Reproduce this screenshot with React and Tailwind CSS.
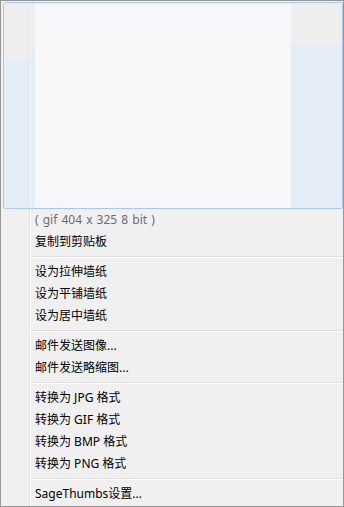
const items = [
  { type: 'item', label: '复制到剪贴板' },
  { type: 'sep' },
  { type: 'item', label: '设为拉伸墙纸' },
  { type: 'item', label: '设为平铺墙纸' },
  { type: 'item', label: '设为居中墙纸' },
  { type: 'sep' },
  { type: 'item', label: '邮件发送图像...' },
  { type: 'item', label: '邮件发送略缩图...' },
  { type: 'sep' },
  { type: 'item', label: '转换为 JPG 格式' },
  { type: 'item', label: '转换为 GIF 格式' },
  { type: 'item', label: '转换为 BMP 格式' },
  { type: 'item', label: '转换为 PNG 格式' },
  { type: 'sep' },
  { type: 'item', label: 'SageThumbs设置...' },
];

function Gutter() {
  return (
    <>
      <div className="w-[28px] shrink-0" />
      <div className="w-px shrink-0 bg-[#e2e3e3]" />
      <div className="w-px shrink-0 bg-white" />
    </>
  );
}

function MenuRow({ children, muted = false }) {
  return (
    <div className="flex h-[22px]">
      <Gutter />
      <div
        className={
          'flex items-center pl-[4px] text-[12px] ' +
          (muted ? 'text-[#6d6d6d] [word-spacing:1px]' : 'text-black')
        }
      >
        {children}
      </div>
    </div>
  );
}

function Separator() {
  return (
    <div className="flex h-[8px]">
      <Gutter />
      <div className="flex flex-1 flex-col pt-[3px]">
        <div className="h-px bg-[#e0e0e0]" />
        <div className="h-px bg-white" />
      </div>
    </div>
  );
}

function Preview() {
  // highlighted thumbnail item
  return (
    <div className="pl-[2px] pt-px">
      <div className="flex h-[207px] w-[340px] overflow-hidden rounded-[3px] border border-[#a8caf0]">
        <div className="flex w-[25px] flex-col bg-[#e4ecf7]">
          <div className="h-[57px] bg-[#eeeeee]" />
        </div>
        <div className="w-px bg-[#e4e6e8]" />
        <div className="w-px bg-[#f4f7fb]" />
        <div className="flex w-[4px] flex-col bg-[#e4ecf7]">
          <div className="h-[42px] bg-[#eeeeee]" />
        </div>
        <div className="w-[256px] bg-[#f7f7f9]" />
        <div className="flex flex-1 flex-col bg-[#e4ecf7]">
          <div className="h-[42px] bg-[#eeeeee]" />
        </div>
      </div>
    </div>
  );
}

export default function App() {
  return (
    <div
      className="flex h-[507px] w-[344px] flex-col border border-[#979797] bg-[#f0f0f0]"
      style={{ fontFamily: '"Noto Sans", "Noto Sans CJK SC", sans-serif' }}
    >
      <Preview />
      <MenuRow muted>( gif 404 x 325 8 bit )</MenuRow>
      {items.map((it, i) =>
        it.type === 'sep' ? (
          <Separator key={i} />
        ) : (
          <MenuRow key={i}>{it.label}</MenuRow>
        )
      )}
      <div className="flex flex-1">
        <Gutter />
      </div>
    </div>
  );
}
